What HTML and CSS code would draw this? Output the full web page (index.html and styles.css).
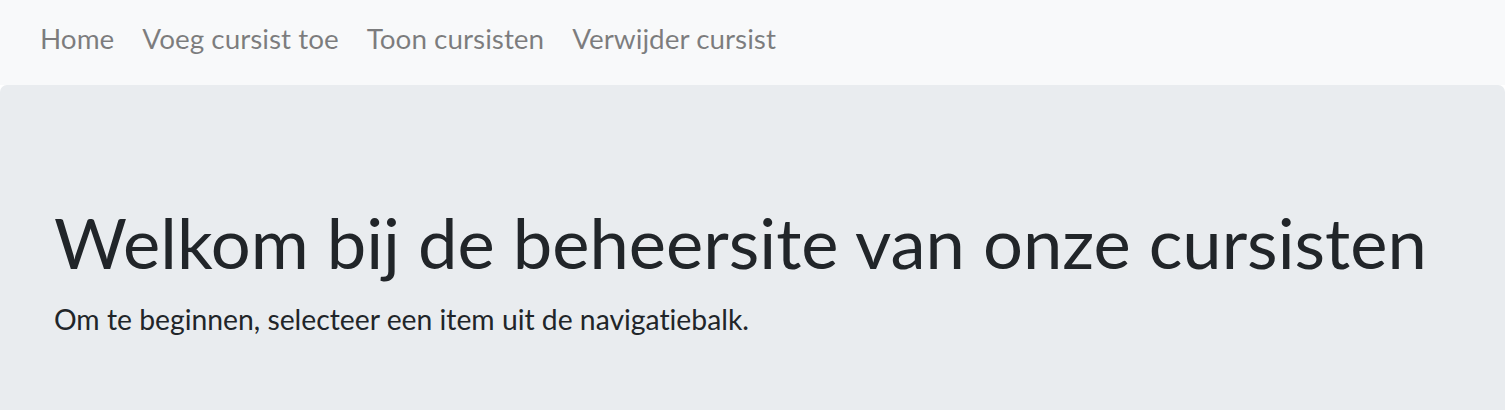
FILE: index.html
```html
<!DOCTYPE html>
<html lang="nl">
<head>
<meta charset="utf-8">
<title>Cursisten</title>
<link rel="stylesheet" href="styles.css">
</head>
<body>
<div class="page">
  <nav class="navbar">
    <ul class="nav">
      <li><a class="nav-link" href="#">Home</a></li>
      <li><a class="nav-link" href="#">Voeg cursist toe</a></li>
      <li><a class="nav-link" href="#">Toon cursisten</a></li>
      <li><a class="nav-link" href="#">Verwijder cursist</a></li>
    </ul>
  </nav>
  <main class="jumbotron">
    <h1 class="display">Welkom bij de beheersite van onze cursisten</h1>
    <p class="lead">Om te beginnen, selecteer een item uit de navigatiebalk.</p>
  </main>
</div>
</body>
</html>
```
FILE: styles.css
```css
html, body {
  margin: 0;
  padding: 0;
  background: #ffffff;
}
body {
  font-family: Lato, "Noto Sans", sans-serif;
  font-variant-ligatures: none;
  color: #212529;
}
.page {
  width: 1505px;
  height: 410px;
  overflow: hidden;
}
.navbar {
  background: #f8f9fa;
  padding: 20px 24px 29px 26px;
}
.nav {
  list-style: none;
  margin: 0;
  padding: 0;
  display: flex;
}
.nav-link {
  display: block;
  padding: 0 14px;
  font-size: 27.9px;
  line-height: 36px;
  color: rgba(0, 0, 0, 0.5);
  text-decoration: none;
}
.jumbotron {
  background: #e9ecef;
  border-radius: 7px;
  padding: 115px 54px 96px 54px;
}
.display {
  margin: 0 0 13px 0;
  font-size: 70.5px;
  font-weight: 400;
  line-height: 1.2;
  white-space: nowrap;
}
.lead {
  margin: 0;
  font-size: 28.3px;
  font-weight: 400;
  line-height: 42px;
}
```
